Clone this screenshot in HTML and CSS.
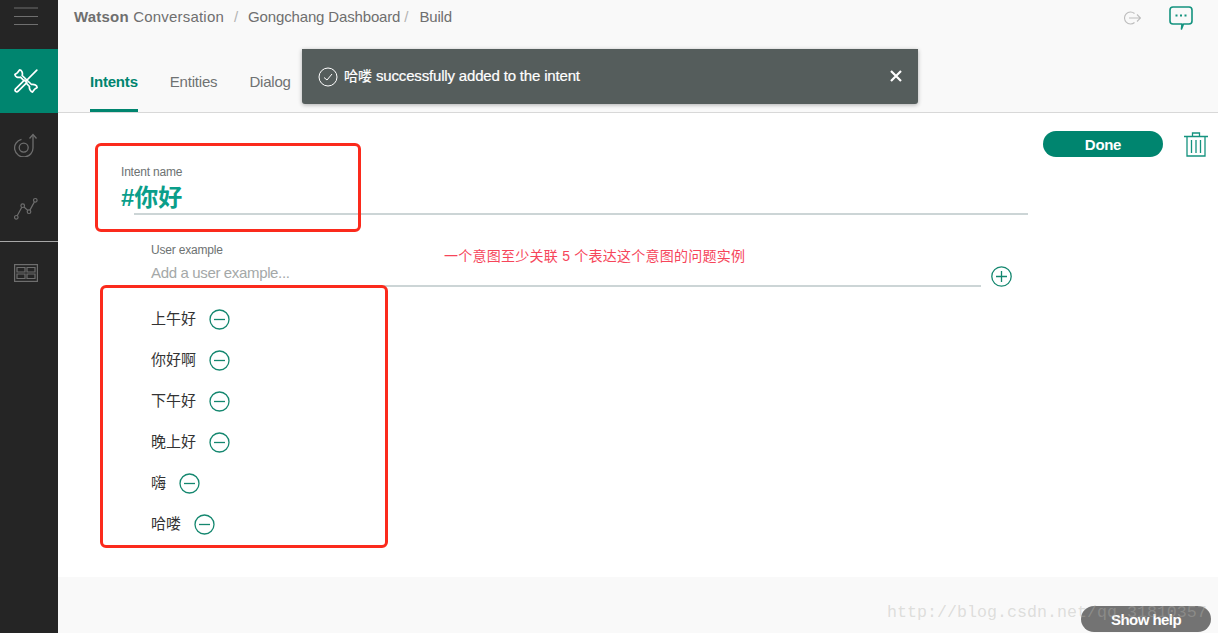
FILE: index.html
```html
<!DOCTYPE html>
<html lang="zh">
<head>
<meta charset="utf-8">
<title>Watson Conversation</title>
<link rel="stylesheet" href="styles.css">
</head>
<body>
<div class="app">
  <nav class="sidebar">
    <div class="nav-menu">
      <svg class="ic-menu" width="24" height="18" viewBox="0 0 24 18"><path d="M0 1h24M0 9.500h24M0 17.500h24" stroke="#6f6f6f" stroke-width="1" fill="none"/></svg>
    </div>
    <div class="nav-item active">
      <svg width="24" height="24" viewBox="0 0 24 24" fill="none" stroke="#fff" stroke-width="1.700" stroke-linejoin="round" stroke-linecap="round">
        <path d="M5.500.9 3.600 3.600.9 5.500C1 7.500 3.500 9 6.500 8.200L15.500 17.500C15 19.500 16.500 22.500 18.500 23.100L20.400 20.400 23.100 18.500C23 16.500 20.500 15 17.500 15.500L8.200 6.500C9 3.500 7.500 1 5.500.9z"/>
        <path d="M22.800 1.200 11.500 12.500"/>
        <path d="M12.800 13.600 10.400 11.200 1.600 19.800C.8 20.800 1 21.800 1.700 22.400 2.400 23 3.400 23 4.200 22.200z" fill="#00856f"/>
      </svg>
    </div>
    <div class="nav-item">
      <svg width="24" height="24" viewBox="0 0 24 24" fill="none" stroke="#6e6e6e" stroke-width="1.300">
        <circle cx="9.700" cy="14.600" r="4.500"/>
        <path d="M19 2v12.500a9.200 9 0 1 1-11.500-8.200"/>
        <path d="M15.500 5.500 19 1.500l3.500 4"/>
      </svg>
    </div>
    <div class="nav-item">
      <svg width="24" height="24" viewBox="0 0 24 24" fill="none" stroke="#6e6e6e" stroke-width="1.200">
        <circle cx="2.300" cy="20.300" r="1.800"/><circle cx="8.700" cy="8.700" r="1.800"/><circle cx="15" cy="14.700" r="1.800"/><circle cx="21.300" cy="3.300" r="1.800"/>
        <path d="M3.200 18.700 7.800 10.300M10 10l3.700 3.400M15.900 13.100l4.500-8.200"/>
      </svg>
    </div>
    <div class="nav-item nav-last">
      <svg width="24" height="18" viewBox="0 0 24 18" fill="none" stroke="#6e6e6e" stroke-width="1.200">
        <rect x=".6" y=".6" width="22.800" height="16.800"/>
        <path d="M3 3.500h8v4.500H3zM13 3.500h8v4.500h-8zM3 10h8v4.500H3zM13 10h8v4.500h-8z"/>
      </svg>
    </div>
  </nav>

  <main class="main">
    <header class="header">
      <div class="topbar">
        <div class="crumbs"><span class="crumb-root"><strong>Watson</strong> Conversation</span> <span class="sep">/</span> Gongchang Dashboard <span class="sep sep-near">/</span> Build</div>
        <div class="top-icons">
          <svg class="ic-logout" width="17" height="14" viewBox="0 0 17 14" fill="none" stroke="#bdbdbd" stroke-width="1.100">
            <path d="M10.500 2.500A6 6 0 1 0 10.500 11.500M5 7h11.500M13 3.500 16.500 7 13 10.500"/>
          </svg>
          <svg width="24" height="24" viewBox="0 0 24 24" fill="none" stroke="#14937f" stroke-width="1.600">
            <path d="M4 1h16a3 3 0 0 1 3 3v11a3 3 0 0 1-3 3h-5.500L12.500 23l.5-5H4a3 3 0 0 1-3-3V4a3 3 0 0 1 3-3z" stroke-linejoin="round"/>
            <path d="M6.500 9.500h2M11 9.500h2M15.500 9.500h2" stroke-width="1.800"/>
          </svg>
        </div>
      </div>
      <div class="tabs">
        <a class="tab tab-active">Intents</a>
        <a class="tab">Entities</a>
        <a class="tab">Dialog</a>
      </div>
    </header>

    <section class="content">
      <div class="actions">
        <button class="done">Done</button>
        <svg width="24" height="25" viewBox="0 0 24 25" fill="none" stroke="#14937f" stroke-width="1.300">
          <path d="M0 4.500h24M8.500 4.500V1h7v3.500M3 4.500v19.500h18V4.500M7.500 8v13M12 8v13M16.500 8v13"/>
        </svg>
      </div>
      <div class="name-field">
        <label class="name-label">Intent name</label>
        <div class="name-value">#你好</div>
        <div class="name-line"></div>
      </div>
      <div class="example-field">
        <label class="example-label">User example</label>
        <div class="example-row">
          <div class="example-input">Add a user example...</div>
          <svg class="plus" width="21" height="21" viewBox="0 0 21 21" fill="none" stroke="#14876f" stroke-width="1.300">
            <circle cx="10.500" cy="10.500" r="9.700"/><path d="M10.500 5v11M5 10.500h11"/>
          </svg>
        </div>
      </div>
      <ul class="examples">
        <li class="example"><span>上午好</span><svg class="minus" width="21" height="21" viewBox="0 0 21 21"><circle cx="10.500" cy="10.500" r="9.500"/><path d="M5 10.500h11"/></svg></li>
        <li class="example"><span>你好啊</span><svg class="minus" width="21" height="21" viewBox="0 0 21 21"><circle cx="10.500" cy="10.500" r="9.500"/><path d="M5 10.500h11"/></svg></li>
        <li class="example"><span>下午好</span><svg class="minus" width="21" height="21" viewBox="0 0 21 21"><circle cx="10.500" cy="10.500" r="9.500"/><path d="M5 10.500h11"/></svg></li>
        <li class="example"><span>晚上好</span><svg class="minus" width="21" height="21" viewBox="0 0 21 21"><circle cx="10.500" cy="10.500" r="9.500"/><path d="M5 10.500h11"/></svg></li>
        <li class="example"><span>嗨</span><svg class="minus" width="21" height="21" viewBox="0 0 21 21"><circle cx="10.500" cy="10.500" r="9.500"/><path d="M5 10.500h11"/></svg></li>
        <li class="example"><span>哈喽</span><svg class="minus" width="21" height="21" viewBox="0 0 21 21"><circle cx="10.500" cy="10.500" r="9.500"/><path d="M5 10.500h11"/></svg></li>
      </ul>
    </section>
    <footer class="footer"></footer>
  </main>
</div>

<div class="toast">
  <svg width="20" height="20" viewBox="0 0 20 20" fill="none" stroke="#fff" stroke-width="1">
    <circle cx="10" cy="10" r="9"/><path d="M6 10.500 9 13l5-6"/>
  </svg>
  <span class="toast-text"><span class="toast-cjk">哈喽</span> successfully added to the intent</span>
  <svg class="toast-close" width="12" height="12" viewBox="0 0 12 12" stroke="#fff" stroke-width="2.200"><path d="M1 1l10 10M11 1 1 11"/></svg>
</div>

<div class="mark mark-name"></div>
<div class="mark mark-list"></div>
<div class="note">一个意图至少关联 5 个表达这个意图的问题实例</div>
<button class="help">Show help</button>
<div class="watermark">http://blog.csdn.net/qq_31810357</div>
</body>
</html>
```

FILE: styles.css
```css
* { box-sizing: border-box; }
html, body { margin: 0; height: 100%; overflow: hidden; }
body {
  font-family: "Liberation Sans", "Noto Sans CJK SC", sans-serif;
  color: #333;
  background: #fff;
}
.app { display: flex; height: 633px; }

.sidebar { width: 58px; flex: none; background: #252525; display: flex; flex-direction: column; }
.nav-menu { height: 49px; padding: 7px 0 0 14px; }
.ic-menu { display: block; }
.nav-item { height: 64px; display: flex; align-items: center; justify-content: center; padding-right: 6px; }
.nav-item.active { background: #00856f; }
.nav-last { border-top: 1px solid #a8a8a8; height: 62px; }

.main { flex: 1; min-width: 0; display: flex; flex-direction: column; }
.header { height: 113px; flex: none; background: #f9f9f9; border-bottom: 1px solid #d8d8d8; display: flex; flex-direction: column; }
.topbar { height: 49px; display: flex; justify-content: space-between; padding: 4px 25px 0 16px; }
.crumbs { font-size: 15px; line-height: 26px; color: #6f6f6f; letter-spacing: -.15px; }
.crumb-root { letter-spacing: .2px; }
.crumbs strong { font-weight: 700; }
.sep { color: #b4b4b4; margin: 0 6px; }
.sep-near { margin: 0 7px 0 0; }
.top-icons { display: flex; gap: 28px; align-items: flex-start; padding-top: 2px; }
.ic-logout { margin-top: 5px; }

.tabs { flex: 1; display: flex; gap: 32px; padding-left: 32px; }
.tab { font-size: 15px; line-height: 66px; height: 63px; color: #6f7272; letter-spacing: -.2px; }
.tab-active { color: #00856f; font-weight: 700; border-bottom: 3px solid #00856f; }

.content { position: relative; flex: 1; min-height: 0; }
.actions { position: absolute; top: 18px; right: 10px; display: flex; align-items: center; gap: 21px; }
.done { width: 120px; height: 26px; border: 0; border-radius: 13px; background: #00856f; color: #fff; font: 700 15px/28px "Liberation Sans", sans-serif; letter-spacing: -.3px; padding: 0; }

.name-field { margin-left: 63px; padding-top: 52px; width: 907px; }
.name-label { display: block; font-size: 12px; line-height: 14px; color: #6d7272; letter-spacing: -.2px; }
.name-value { font-size: 24px; line-height: 30px; font-weight: 700; color: #0a9e8a; margin-top: 4px; }
.name-line { height: 2px; background: #ccd5d6; margin: 0 0 0 13px; }

.example-field { margin-left: 93px; margin-top: 28px; }
.example-label { display: block; font-size: 12px; line-height: 14px; color: #6d7272; letter-spacing: -.2px; }
.example-row { display: flex; align-items: flex-start; gap: 10px; margin-top: 5px; }
.example-input { width: 830px; height: 25px; font-size: 15px; line-height: 22px; color: #a4a8a8; border-bottom: 2px solid #ccd5d6; letter-spacing: -.35px; }
.plus { margin-top: 4px; }

.examples { list-style: none; margin: 12px 0 0 93px; padding: 0; }
.example { height: 41px; display: flex; align-items: center; gap: 13px; font-size: 15px; color: #333; }
.example span { position: relative; top: -2px; }
.minus { fill: none; stroke: #14876f; stroke-width: 1.300; }

.footer { height: 56px; flex: none; background: #f9f9f9; }

.toast { position: absolute; left: 302px; top: 49px; width: 616px; height: 55px; background: #555d5c; border-radius: 0 0 3px 3px; box-shadow: 0 1px 4px rgba(0,0,0,.3); display: flex; align-items: center; padding: 0 16px; gap: 6px; color: #fff; font-size: 15px; letter-spacing: -.17px; }
.toast-text { position: relative; top: -2px; -webkit-text-stroke: .2px #fff; }
.toast-cjk { font-size: 14px; letter-spacing: 0; }
.toast-close { margin-left: auto; margin-top: -1px; }

.mark { position: absolute; border: 3px solid #fb2a1c; border-radius: 6px; }
.mark-name { left: 95px; top: 143px; width: 266px; height: 89px; }
.mark-list { left: 100px; top: 285px; width: 288px; height: 263px; }
.note { position: absolute; left: 444px; top: 247px; font-size: 14px; line-height: 18px; color: #f6455a; letter-spacing: .25px; }
.help { position: absolute; left: 1081px; top: 606px; width: 130px; height: 26px; border: 0; border-radius: 13px; background: #737373; color: #fff; font: 700 15px/28px "Liberation Sans", sans-serif; letter-spacing: -.55px; padding: 0; }
.watermark { position: absolute; left: 887px; top: 601px; font: 16.67px/24px "Liberation Mono", monospace; color: rgba(177,177,172,.4); white-space: nowrap; }
```
